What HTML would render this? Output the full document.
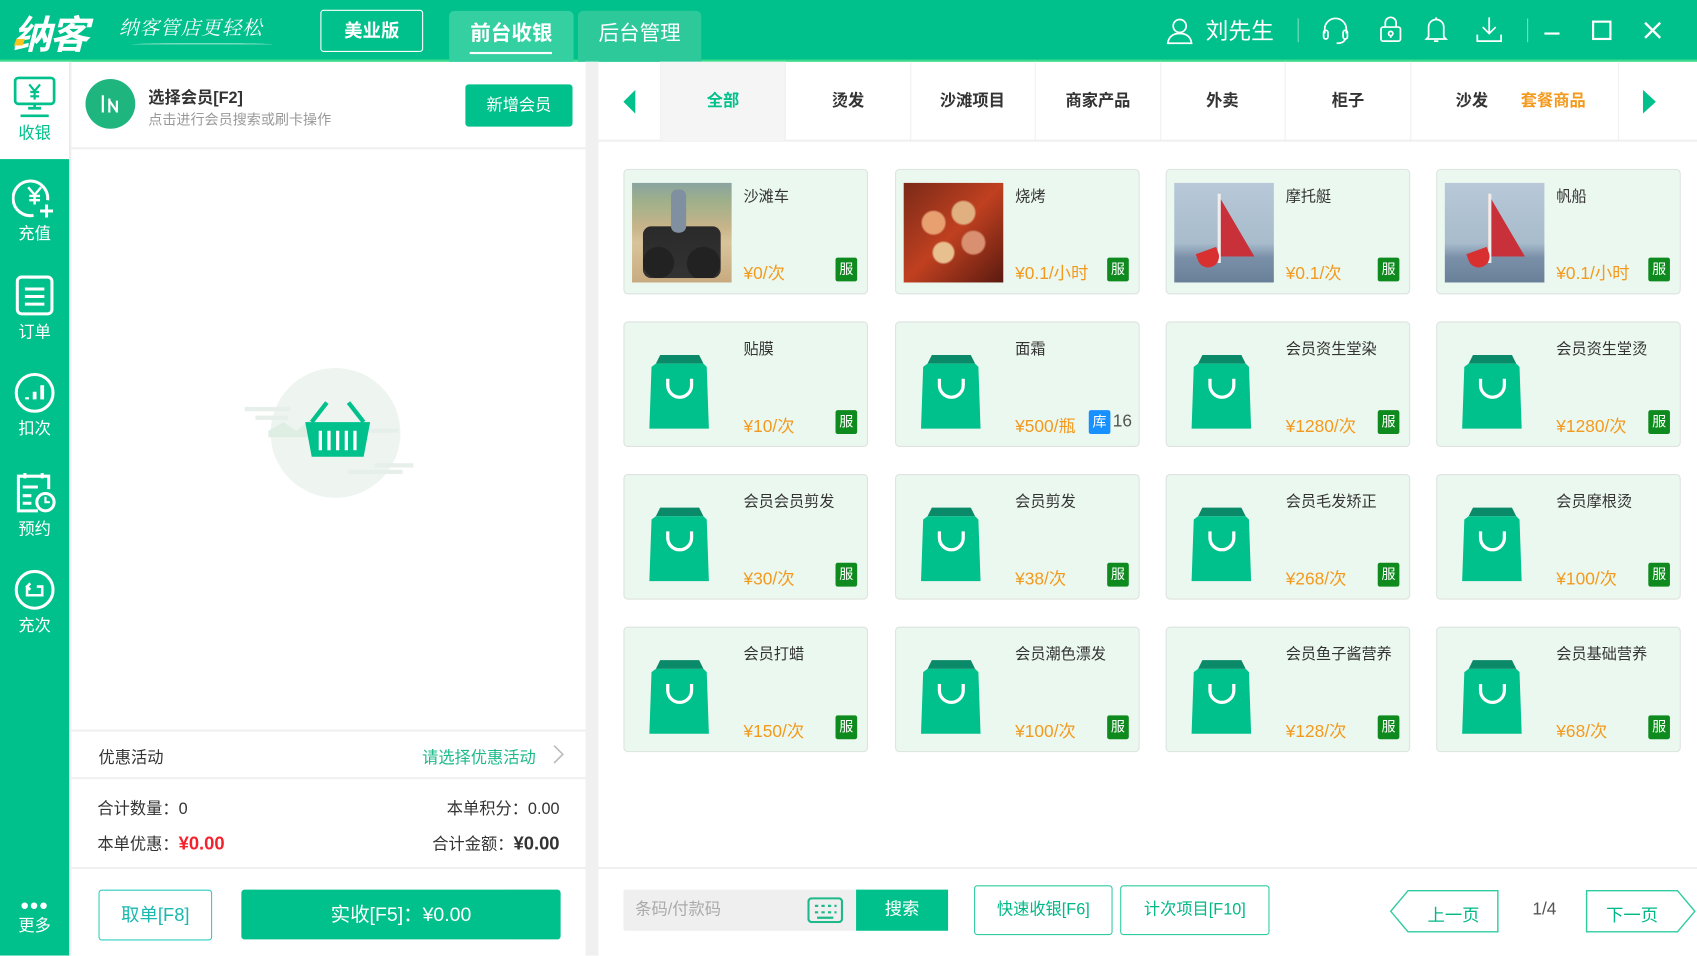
<!DOCTYPE html>
<html><head><meta charset="utf-8">
<style>
*{margin:0;padding:0;box-sizing:border-box}
html,body{width:1697px;height:956px;overflow:hidden;background:#fff}
body{font-family:"Liberation Sans","Noto Sans CJK SC",sans-serif;color:#333}
#w{position:absolute;left:0;top:0;width:1568px;height:883px;transform:scale(1.08227);transform-origin:0 0;overflow:hidden;background:#fff}
.a{position:absolute}
.hdr{left:0;top:0;width:1568px;height:57px;background:#00c08b;border-bottom:2px solid #3ddc8a}
.side{left:0;top:57px;width:64px;height:826px;background:#00c08b}
.si{position:absolute;left:0;width:64px;text-align:center;color:#fff;font-size:15px}
.si svg{display:block;margin:0 auto 2px}
.card{position:absolute;width:226px;height:116px;background:#ebf8ef;border:1px solid #dde3df;border-radius:4px}
.card .nm{position:absolute;left:110px;top:13px;font-size:14px;color:#333;width:100px;line-height:23px}
.card .pr{position:absolute;left:110px;top:82px;font-size:16px;color:#f39a1e}
.card .bd{position:absolute;right:9px;top:81px;width:20px;height:22px;background:#0f8a1e;color:#fff;font-size:13px;text-align:center;line-height:22px;border-radius:2px}
.card .im{position:absolute;left:7px;top:12px;width:92px;height:92px}
.cat{position:absolute;top:57px;height:73px;width:116px;text-align:center;line-height:73px;font-size:15px;font-weight:bold;color:#333;border-right:1px solid #f0f0f0}
.ob{position:absolute;border:1px solid #2fcca0;border-radius:3px;color:#00b887;text-align:center;font-size:15px}
</style></head><body>
<div id="w">
<div class="a hdr"></div>
<div class="a" style="left:12px;top:4px;font-size:36px;font-weight:bold;font-style:italic;color:#fff;letter-spacing:-2px">纳客</div>
<div class="a" style="left:14px;top:36px;width:8px;height:6px;background:#f7c51e;transform:skew(-20deg)"></div>
<div class="a" style="left:110px;top:12px;font-size:18px;font-style:italic;color:#fff;font-family:'Noto Serif CJK SC',serif;letter-spacing:1px">纳客管店更轻松</div>
<div class="a" style="left:122px;top:40px;width:130px;height:2px;border-top:1px solid #d8f5ea;border-radius:50%"></div>
<div class="a" style="left:296px;top:9px;width:95px;height:39px;border:1px solid #fff;border-radius:3px;color:#fff;font-weight:bold;font-size:17px;text-align:center;line-height:37px">美业版</div>
<div class="a" style="left:415px;top:10px;width:115px;height:47px;background:#35d0a2;border-radius:5px 5px 0 0;color:#fff;font-size:19px;font-weight:bold;text-align:center;line-height:44px">前台收银</div>
<div class="a" style="left:434px;top:48px;width:76px;height:2px;background:#fff"></div>
<div class="a" style="left:534px;top:10px;width:114px;height:47px;background:#2ec99a;border-radius:5px 5px 0 0;color:#fff;font-size:19px;text-align:center;line-height:44px">后台管理</div>
<svg class="a" style="left:1076px;top:14px" width="28" height="28" viewBox="0 0 28 28" fill="none" stroke="#fff" stroke-width="1.6"><circle cx="14" cy="10" r="6"/><path d="M3 26c1-7 6-9 11-9s10 2 11 9z"/></svg>
<div class="a" style="left:1114px;top:13px;color:#fff;font-size:21px">刘先生</div>
<div class="a" style="left:1199px;top:17px;width:1px;height:22px;background:#7fdfbf"></div>
<div class="a" style="left:1411px;top:17px;width:1px;height:22px;background:#7fdfbf"></div>
<svg class="a" style="left:1220px;top:14px" width="28" height="28" viewBox="0 0 28 28" fill="none" stroke="#fff" stroke-width="1.6"><path d="M4 17v-4a10 10 0 0 1 20 0v4"/><rect x="3" y="14" width="4" height="8" rx="2"/><rect x="21" y="14" width="4" height="8" rx="2"/><path d="M23 22c-1 3-4 4-8 4"/></svg>
<svg class="a" style="left:1272px;top:13px" width="26" height="28" viewBox="0 0 26 28" fill="none" stroke="#fff" stroke-width="1.6"><rect x="4" y="12" width="18" height="13" rx="2"/><path d="M8 12V8a5 5 0 0 1 10 0v4"/><circle cx="13" cy="18" r="2"/><path d="M13 20v2"/></svg>
<svg class="a" style="left:1314px;top:13px" width="26" height="28" viewBox="0 0 26 28" fill="none" stroke="#fff" stroke-width="1.6"><path d="M6 21V12a7 7 0 0 1 14 0v9l2 2H4z"/><path d="M11 25h4M13 3v2"/></svg>
<svg class="a" style="left:1362px;top:13px" width="28" height="28" viewBox="0 0 28 28" fill="none" stroke="#fff" stroke-width="1.6"><path d="M14 3v15M8 12l6 6 6-6M3 19v6h22v-6"/></svg>
<div class="a" style="left:1427px;top:30px;width:14px;height:2px;background:#fff"></div>
<div class="a" style="left:1471px;top:19px;width:18px;height:18px;border:2px solid #fff"></div>
<svg class="a" style="left:1518px;top:19px" width="18" height="18" viewBox="0 0 18 18" stroke="#fff" stroke-width="2.2"><path d="M2 2l14 14M16 2L2 16"/></svg>

<div class="a side"></div>
<div class="a" style="left:0;top:57px;width:64px;height:90px;background:#fff"></div>
<div class="si" style="top:70px;color:#00c08b">
<svg width="42" height="40" viewBox="0 0 42 40" fill="none" stroke="#00c08b" stroke-width="2.5"><rect x="3" y="2" width="36" height="24" rx="3"/><path d="M16 8l5 6 5-6M21 14v8M17 15h8M17 19h8" stroke-width="2"/><path d="M15 30h12M21 26v4M8 37h26"/></svg>收银</div>
<div class="si" style="top:163px"><svg width="42" height="40" viewBox="0 0 42 40" fill="none" stroke="#fff" stroke-width="2.8"><path d="M33 22A16 16 0 1 0 20 36"/><path d="M15 10l6 7 6-7M21 17v9M16 18h10M16 22h10" stroke-width="2.2"/><path d="M32 26v12M26 32h12"/></svg>充值</div>
<div class="si" style="top:252px"><svg width="42" height="42" viewBox="0 0 42 42" fill="none" stroke="#fff" stroke-width="2.8"><rect x="5" y="4" width="32" height="34" rx="4"/><path d="M16 4h10M12 15h18M12 22h18M12 29h18"/></svg>订单</div>
<div class="si" style="top:343px"><svg width="42" height="40" viewBox="0 0 42 40" fill="none" stroke="#fff" stroke-width="2.8"><circle cx="21" cy="20" r="17"/><path d="M14 24v2M21 19v7M28 13v13" stroke-width="3.5"/></svg>扣次</div>
<div class="si" style="top:434px"><svg width="42" height="42" viewBox="0 0 42 42" fill="none" stroke="#fff" stroke-width="2.8"><path d="M24 38H6V6h28v12"/><path d="M12 3v5M28 3v5M10 16h14M10 24h8M10 31h8"/><circle cx="31" cy="30" r="8"/><path d="M31 25v5h4" stroke-width="2"/></svg>预约</div>
<div class="si" style="top:525px"><svg width="42" height="40" viewBox="0 0 42 40" fill="none" stroke="#fff" stroke-width="2.8"><circle cx="21" cy="20" r="17"/><path d="M14 17v8h14v-8h-5M17 14l-3 3 3 3" stroke-width="2.4"/></svg>充次</div>
<div class="si" style="top:830px"><div style="font-size:22px;line-height:14px;letter-spacing:1px">•••</div>更多</div>

<div class="a" style="left:64px;top:57px;width:2px;height:826px;background:#eee"></div>
<div class="a" style="left:541px;top:57px;width:12px;height:826px;background:#f0f0f0"></div>
<div class="a" style="left:79px;top:73px;width:46px;height:46px;border-radius:50%;background:#1fb57f"></div>
<svg class="a" style="left:91px;top:85px" width="22" height="22" viewBox="0 0 22 22" fill="none" stroke="#fff" stroke-width="2"><path d="M4 3v16M10 6v13M10 8l7 10M17 8v11"/></svg>
<div class="a" style="left:137px;top:79px;font-size:15px;font-weight:bold;color:#333">选择会员[F2]</div>
<div class="a" style="left:137px;top:100px;font-size:13px;color:#999">点击进行会员搜索或刷卡操作</div>
<div class="a" style="left:430px;top:78px;width:99px;height:39px;background:#00c08b;border-radius:3px;color:#fff;font-size:15px;text-align:center;line-height:39px">新增会员</div>
<div class="a" style="left:66px;top:136px;width:475px;height:2px;background:#f0f0f0"></div>
<svg class="a" style="left:226px;top:340px" width="160" height="124" viewBox="0 0 160 124"><circle cx="84" cy="60" r="60" fill="#eef5f0"/><path d="M22 58l14-8 12 8 12-10 20 16H22z" fill="#dfeee3"/><path d="M0 38h42M10 46h30M112 58h30M120 90h36M96 96h50" stroke="#e6efe9" stroke-width="4"/><path d="M56 50h60l-6 32H62z" fill="#00c08b"/><path d="M62 50l14-18M110 50L96 32" stroke="#00c08b" stroke-width="4" fill="none"/><path d="M70 58v18M78 58v18M86 58v18M94 58v18M102 58v18" stroke="#fff" stroke-width="3"/></svg>
<div class="a" style="left:66px;top:674px;width:475px;height:2px;background:#f0f0f0"></div>
<div class="a" style="left:91px;top:689px;font-size:15px;color:#333">优惠活动</div>
<div class="a" style="left:390px;top:689px;font-size:15px;color:#1db98a">请选择优惠活动</div>
<svg class="a" style="left:510px;top:687px" width="12" height="20" viewBox="0 0 12 20" fill="none" stroke="#bbb" stroke-width="1.5"><path d="M2 2l8 8-8 8"/></svg>
<div class="a" style="left:66px;top:718px;width:475px;height:2px;background:#f0f0f0"></div>
<div class="a" style="left:90px;top:736px;font-size:15px;color:#333">合计数量：0</div>
<div class="a" style="left:300px;top:736px;width:217px;text-align:right;font-size:15px;color:#333">本单积分：0.00</div>
<div class="a" style="left:90px;top:769px;font-size:15px;color:#333">本单优惠：<b style="color:#f5222d;font-size:17px">¥0.00</b></div>
<div class="a" style="left:300px;top:769px;width:217px;text-align:right;font-size:15px;color:#333">合计金额：<b style="font-size:17px">¥0.00</b></div>
<div class="a" style="left:66px;top:801px;width:475px;height:2px;background:#f0f0f0"></div>
<div class="a" style="left:91px;top:822px;width:105px;height:47px;border:1px solid #2fccc0;border-radius:3px;color:#1ab8b0;font-size:17px;text-align:center;line-height:45px">取单[F8]</div>
<div class="a" style="left:223px;top:822px;width:295px;height:46px;background:#00c08b;border-radius:3px;color:#fff;font-size:18px;text-align:center;line-height:46px">实收[F5]：¥0.00</div>

<div class="a" style="left:553px;top:129px;width:1015px;height:2px;background:#f0f0f0"></div>
<svg class="a" style="left:576px;top:83px" width="12" height="22" viewBox="0 0 12 22"><path d="M11 0v22L0 11z" fill="#00c08b"/></svg>
<div class="cat" style="left:610px;background:#f5f5f5;color:#00c08b;border-left:1px solid #f0f0f0">全部</div>
<div class="cat" style="left:726px">烫发</div>
<div class="cat" style="left:841px">沙滩项目</div>
<div class="cat" style="left:957px">商家产品</div>
<div class="cat" style="left:1072px">外卖</div>
<div class="cat" style="left:1188px">柜子</div>
<div class="cat" style="left:1304px;width:192px;text-align:left;padding-left:41px">沙发 <span style="color:#f39a1e;margin-left:26px">套餐商品</span></div>
<svg class="a" style="left:1518px;top:83px" width="12" height="22" viewBox="0 0 12 22"><path d="M0 0v22L12 11z" fill="#00c08b"/></svg>

<div id="cards"></div>

<div class="a" style="left:553px;top:801px;width:1015px;height:2px;background:#f0f0f0"></div>
<div class="a" style="left:576px;top:822px;width:215px;height:38px;background:#efefef;border-radius:2px 0 0 2px;color:#aaa;font-size:15px;line-height:38px;padding-left:11px">条码/付款码</div>
<svg class="a" style="left:746px;top:829px" width="33" height="24" viewBox="0 0 33 24" fill="none" stroke="#1db98a" stroke-width="2"><rect x="1" y="1" width="31" height="22" rx="3"/><path d="M7 8h3M13 8h3M19 8h3M25 8h2M7 14h3M13 14h3M19 14h3M25 14h2M9 19h15"/></svg>
<div class="a" style="left:791px;top:822px;width:85px;height:38px;background:#00c08b;color:#fff;font-size:16px;text-align:center;line-height:38px">搜索</div>
<div class="ob" style="left:900px;top:818px;width:128px;height:46px;line-height:44px">快速收银[F6]</div>
<div class="ob" style="left:1035px;top:818px;width:138px;height:46px;line-height:44px">计次项目[F10]</div>
<svg class="a" style="left:1284px;top:822px" width="102" height="40" viewBox="0 0 102 40" fill="none" stroke="#2fcca0" stroke-width="1.3"><path d="M100 1H17L1 20l16 19h83z"/></svg>
<div class="a" style="left:1300px;top:832px;width:86px;text-align:center;color:#00b887;font-size:16px">上一页</div>
<div class="a" style="left:1405px;top:832px;width:44px;text-align:center;color:#555;font-size:16px">1/4</div>
<svg class="a" style="left:1465px;top:822px" width="103" height="40" viewBox="0 0 103 40" fill="none" stroke="#2fcca0" stroke-width="1.3"><path d="M1 1h84l16 19-16 19H1z"/></svg>
<div class="a" style="left:1465px;top:832px;width:86px;text-align:center;color:#00b887;font-size:16px">下一页</div>
</div>
<script>
var items=[["沙滩车","¥0/次","img1"],["烧烤","¥0.1/小时","img2"],["摩托艇","¥0.1/次","img3"],["帆船","¥0.1/小时","img3"],
["贴膜","¥10/次"],["面霜","¥500/瓶","","ku"],["会员资生堂染","¥1280/次"],["会员资生堂烫","¥1280/次"],
["会员会员剪发","¥30/次"],["会员剪发","¥38/次"],["会员毛发矫正","¥268/次"],["会员摩根烫","¥100/次"],
["会员打蜡","¥150/次"],["会员潮色漂发","¥100/次"],["会员鱼子酱营养","¥128/次"],["会员基础营养","¥68/次"]];
var xs=[576,827,1077,1327],ys=[156,297,438,579],h="";
var bag='<svg class="im" viewBox="0 0 92 92" style="left:7px;top:12px"><path d="M26 18h36l4 8H22z" fill="#0a8a68"/><path d="M22 26h44l3 3 2 57H16l2-57z" fill="#00c08b"/><path d="M33 40v6a11 11 0 0 0 22 0v-6" stroke="#fff" stroke-width="3" fill="none"/></svg>';
var imgs={img1:'<div class="im" style="background:linear-gradient(180deg,#8aa3a0 0,#9eb08a 18%,#c8b48a 45%,#d8c49a 60%,#c8aa80 100%)"><div style="position:absolute;left:10px;top:40px;width:72px;height:48px;background:radial-gradient(circle at 20% 70%,#222 0 14px,transparent 15px),radial-gradient(circle at 78% 72%,#222 0 15px,transparent 16px),linear-gradient(#2a2a2a,#333);border-radius:8px"></div><div style="position:absolute;left:36px;top:6px;width:14px;height:40px;background:#8090a0;border-radius:6px"></div></div>',
img2:'<div class="im" style="background:radial-gradient(circle at 30% 40%,#e8a070 0 10px,transparent 12px),radial-gradient(circle at 60% 30%,#e0b080 0 10px,transparent 12px),radial-gradient(circle at 70% 60%,#d89070 0 10px,transparent 12px),radial-gradient(circle at 40% 70%,#e8c090 0 9px,transparent 11px),linear-gradient(135deg,#7a2a18,#c04020 50%,#5a1a10)"></div>',
img3:'<div class="im" style="background:linear-gradient(180deg,#b8c8d8 0,#a8bccc 60%,#7a90a8 75%,#6a8098 100%)"><div style="position:absolute;left:40px;top:10px;width:0;height:0;border-left:34px solid #c8303a;border-top:58px solid transparent"></div><div style="position:absolute;left:40px;top:10px;width:3px;height:64px;background:#eee"></div><div style="position:absolute;left:22px;top:62px;width:20px;height:16px;background:#d83030;border-radius:0 0 10px 10px;transform:rotate(-20deg)"></div></div>'};
items.forEach(function(it,i){var x=xs[i%4],y=ys[Math.floor(i/4)];
h+='<div class="card" style="left:'+x+'px;top:'+y+'px">'+(it[2]?imgs[it[2]]:bag)+'<div class="nm">'+it[0]+'</div><div class="pr">'+it[1]+'</div>'+(it[3]?'<div class="bd" style="right:26px;background:#1890ff">库</div><div style="position:absolute;right:6px;top:83px;font-size:16px;color:#555">16</div>':'<div class="bd">服</div>')+'</div>';});
document.getElementById("cards").innerHTML=h;
</script>
</body></html>
